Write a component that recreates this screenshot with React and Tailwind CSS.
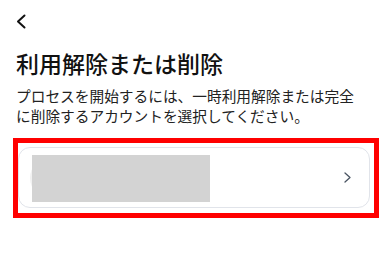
import React from 'react';

const App = () => {
  return (
    <div className="w-[385px] h-[253px] bg-white overflow-hidden" style={{ fontFamily: '"Noto Sans CJK JP", "Noto Sans", sans-serif' }}>
      {/* Back button */}
      <div className="pt-[14px] pl-[16px] h-[48px]">
        <svg width="10" height="15" viewBox="0 0 10 15" fill="none">
          <path d="M8.5 1.5 L2 7.5 L8.5 13.5" stroke="#111" strokeWidth="2" strokeLinecap="round" strokeLinejoin="round" />
        </svg>
      </div>

      {/* Title + description */}
      <div className="px-[16px]">
        <h1 className="text-[23px] leading-[30px] text-[#111] font-medium">利用解除または削除</h1>
        <p className="mt-[8px] text-[14.7px] leading-[20px] text-[#222]">
          プロセスを開始するには、一時利用解除または完全
          <br />
          に削除するアカウントを選択してください。
        </p>
      </div>

      {/* Highlighted account row */}
      <div className="mt-[12px] ml-[13px] w-[366px] border-[5px] border-[#ff0000] pl-0 pr-[4px] pt-[4px] pb-[5px]">
        <div className="relative h-[61px] rounded-[12px] border border-[#e1e4ea] flex items-center justify-between pl-[11px] pr-[18px]">
          <div className="w-[40px] h-[40px] rounded-full bg-[#f1f1f1]" />
          <div className="absolute left-[13px] top-[7px] w-[178px] h-[47px] bg-[#d3d3d3]" />
          <svg width="7" height="11" viewBox="0 0 7 11" fill="none">
            <path d="M1 1 L6 5.5 L1 10" stroke="#4b5563" strokeWidth="1.3" strokeLinecap="round" strokeLinejoin="round" />
          </svg>
        </div>
      </div>
    </div>
  );
};

export default App;
